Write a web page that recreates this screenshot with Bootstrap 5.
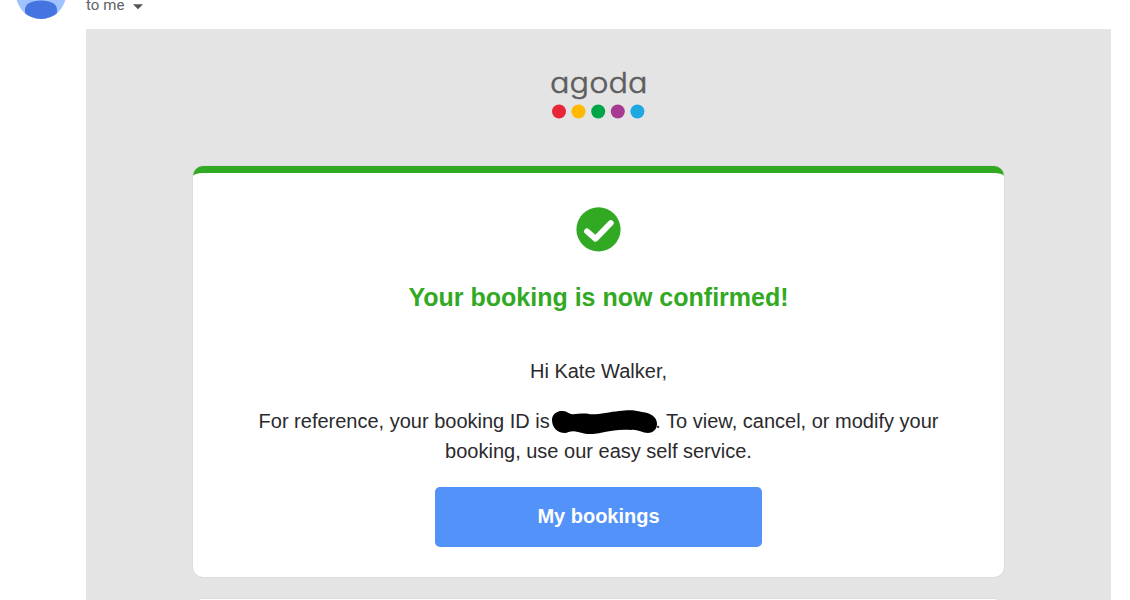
<!DOCTYPE html>
<html lang="en">
<head>
  <meta charset="UTF-8" />
  <title>Booking confirmation</title>
  <meta name="viewport" content="width=device-width, initial-scale=1" />
  <link href="https://cdn.jsdelivr.net/npm/bootstrap@5.3.0/dist/css/bootstrap.min.css" rel="stylesheet" />
  <style>
body {
  height: 600px;
  font-family: "Liberation Sans", Arial, sans-serif;
  font-size: 20px;
  line-height: 30px;
  color: #2a2a2e;
}

/* Sender row */
.mail-head {
  height: 29px;
}
.avatar-slot {
  width: 86px;
  padding-left: 16px;
}
.recipient {
  font-family: Roboto, sans-serif;
  font-size: 15px;
  line-height: 18px;
  letter-spacing: 0.1px;
  color: #606266;
  margin-top: -4px;
  gap: 8px;
}

.mail-body {
  height: 571px;
  width: 1025px;
  margin-left: 86px;
  background: #e4e4e4;
  padding-top: 37px;
}
.brand-logo {
  width: 110px;
  height: 60px;
  overflow: visible;
}
.brand-logo text {
  font-family: Inter, sans-serif;
  font-weight: 300;
  font-feature-settings: "cv11";
}

.notice {
  width: 811px;
  height: 411px;
  margin-top: 40px;
  border: 0;
  border-top: 7px solid #32a923;
  border-radius: 10px;
  box-shadow: 0 0 1px 1px rgba(0, 0, 0, 0.03);
  padding-top: 34px;
}
.notice h1 {
  font-size: 25px;
  line-height: 30px;
  color: #32a923;
  margin: 30px 0 44px;
}
.notice p {
  width: 700px;
  margin-bottom: 20px;
}

/* Blacked-out booking number */
.redacted {
  width: 100px;
  height: 20px;
}
.redacted svg {
  left: -4px;
  top: -3px;
}

.btn-bookings {
  width: 327px;
  height: 60px;
  margin-top: 1px;
  padding-bottom: 2px;
  background: #5392f9;
  border-radius: 5px;
  font-size: 20px;
}
.notice-next {
  width: 811px;
  height: 40px;
  margin-top: 22px;
  border: 0;
  border-radius: 10px;
  box-shadow: 0 0 1px 1px rgba(0, 0, 0, 0.03);
}
  </style>
</head>
<body class="bg-white overflow-hidden">

  <div class="mail-head d-flex">
    <div class="avatar-slot flex-shrink-0">
      <svg class="d-block" width="50" height="20" viewBox="0 0 50 20">
        <defs><clipPath id="face"><circle cx="25" cy="-6" r="25" /></clipPath></defs>
        <g clip-path="url(#face)">
          <rect width="50" height="20" fill="#a0c3ff" />
          <path d="M9 20V10C9 4 15 .5 25 .5S41 4 41 10v10z" fill="#4374e0" />
        </g>
      </svg>
    </div>
    <div class="recipient d-flex align-items-start">
      <span>to me</span>
      <svg width="10" height="18" viewBox="0 0 10 18"><path d="M0 8.3h10l-5 5z" fill="#555" /></svg>
    </div>
  </div>

  <div class="mail-body d-flex flex-column align-items-center overflow-hidden">
    <svg class="brand-logo flex-shrink-0" viewBox="0 0 110 60">
      <text x="6" y="26.5" font-size="29" fill="#5d5e60" stroke="#5d5e60" stroke-width="0.5" textLength="97.5" lengthAdjust="spacingAndGlyphs">agoda</text>
      <circle cx="15" cy="45.5" r="7" fill="#e92637" />
      <circle cx="34.5" cy="45.5" r="7" fill="#ffb900" />
      <circle cx="54.2" cy="45.5" r="7" fill="#00a548" />
      <circle cx="73.8" cy="45.5" r="7" fill="#a63a90" />
      <circle cx="93.4" cy="45.5" r="7" fill="#1ea8e2" />
    </svg>

    <div class="notice card flex-shrink-0 align-items-center text-center">
      <svg class="flex-shrink-0" width="46" height="45" viewBox="0 0 46 45">
        <circle cx="22.5" cy="22.4" r="22.1" fill="#32a923" />
        <path d="M11 24.400L19.500 31.800 34.800 16" fill="none" stroke="#fff" stroke-width="5.800" stroke-linecap="round" stroke-linejoin="round" />
      </svg>
      <h1 class="fw-bold">Your booking is now confirmed!</h1>
      <p>Hi Kate Walker,</p>
      <p>For reference, your booking ID is <span class="redacted d-inline-block position-relative align-middle"><svg class="position-absolute" width="110" height="26" viewBox="0 0 110 26"><path d="M10 1C15 .5 17 3 20 4S32 2.500 38 4 58 2 68 1 83 0 91 2C100 3 106 7 106 14 106 20 101 23 97 23 91 23 86 19 80 20 69 19 59 21 49 23S34 24 27 22 17 23 14 23C6 23 1 17 1 10 1 5 5 1.500 10 1z" fill="#000" /></svg></span>. To view, cancel, or modify your booking, use our easy self service.</p>
      <a href="#" class="btn-bookings d-flex align-items-center justify-content-center text-white text-decoration-none fw-bold">My bookings</a>
    </div>

    <div class="notice-next card flex-shrink-0"></div>
  </div>

  <script src="https://cdn.jsdelivr.net/npm/bootstrap@5.3.0/dist/js/bootstrap.bundle.min.js"></script>
</body>
</html>
